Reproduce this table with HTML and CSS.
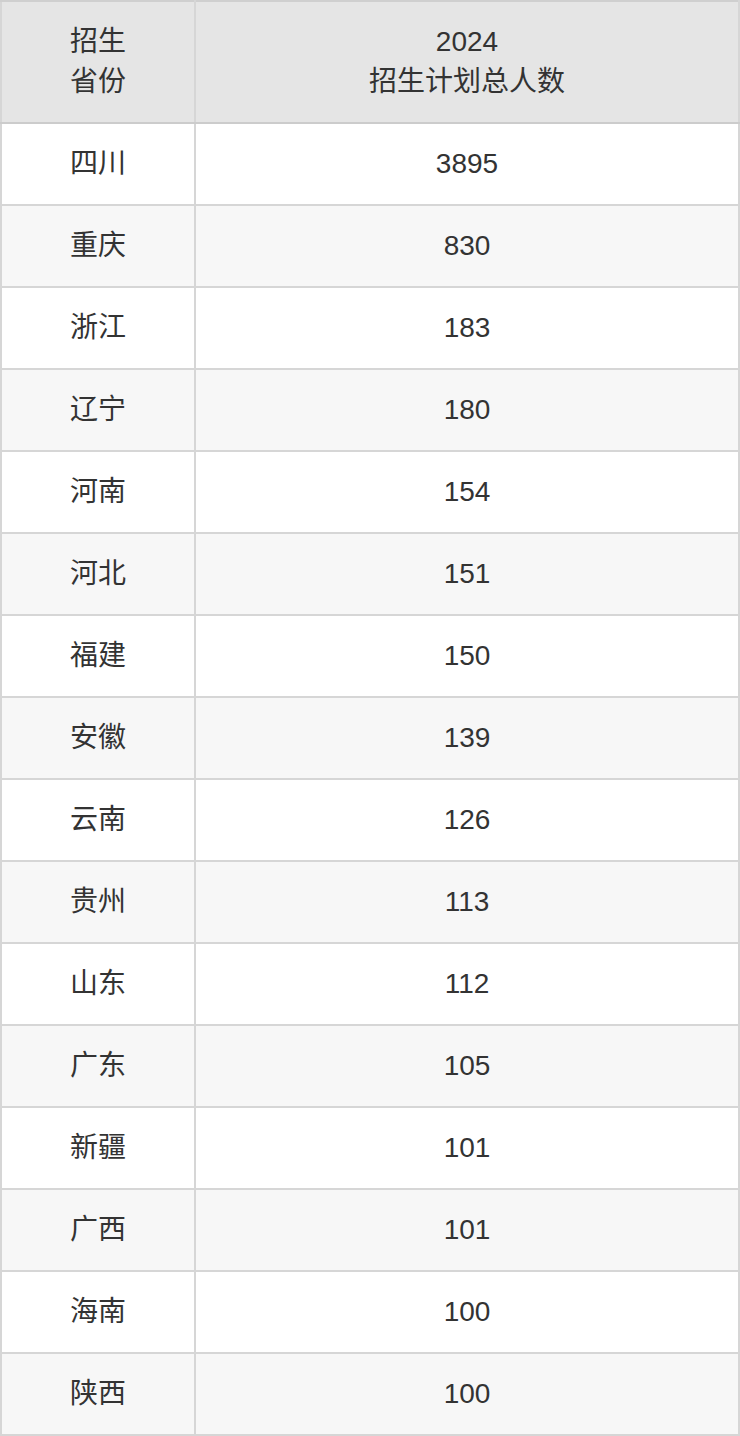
FILE: index.html
```html
<!DOCTYPE html>
<html lang="zh">
<head>
<meta charset="utf-8">
<link rel="stylesheet" href="styles.css">
</head>
<body>
<table class="plan">
  <colgroup><col class="c1"><col class="c2"></colgroup>
  <thead>
    <tr><th>招生<br>省份</th><th>2024<br>招生计划总人数</th></tr>
  </thead>
  <tbody>
    <tr><td>四川</td><td>3895</td></tr>
    <tr><td>重庆</td><td>830</td></tr>
    <tr><td>浙江</td><td>183</td></tr>
    <tr><td>辽宁</td><td>180</td></tr>
    <tr><td>河南</td><td>154</td></tr>
    <tr><td>河北</td><td>151</td></tr>
    <tr><td>福建</td><td>150</td></tr>
    <tr><td>安徽</td><td>139</td></tr>
    <tr><td>云南</td><td>126</td></tr>
    <tr><td>贵州</td><td>113</td></tr>
    <tr><td>山东</td><td>112</td></tr>
    <tr><td>广东</td><td>105</td></tr>
    <tr><td>新疆</td><td>101</td></tr>
    <tr><td>广西</td><td>101</td></tr>
    <tr><td>海南</td><td>100</td></tr>
    <tr><td>陕西</td><td>100</td></tr>
  </tbody>
</table>
</body>
</html>
```

FILE: styles.css
```css
html, body {
  margin: 0;
  padding: 0;
  background: #ffffff;
}
.plan {
  width: 740px;
  border-collapse: collapse;
  table-layout: fixed;
  font-family: "Liberation Sans", "Noto Sans CJK SC", sans-serif;
  font-size: 28px;
  line-height: 40px;
  color: #333333;
}
.c1 { width: 194px; }
.plan th,
.plan td {
  border: 2px solid #d6d6d6;
  padding: 20px 0;
  text-align: center;
  font-weight: normal;
  vertical-align: middle;
}
.plan thead th {
  background: #e5e5e5;
  border-top-color: #cfcfcf;
  border-bottom-color: #cccccc;
}
.plan tbody tr:nth-child(even) td {
  background: #f7f7f7;
}
```
